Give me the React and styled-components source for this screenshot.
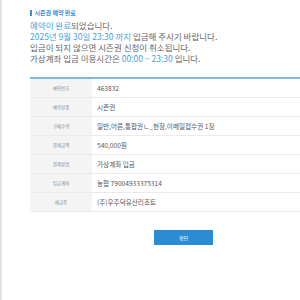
import React from "react";
import styled, { createGlobalStyle } from "styled-components";

const Global = createGlobalStyle`
  html, body {
    margin: 0;
    padding: 0;
    background: #fff;
  }
  body {
    font-family: "Noto Sans CJK KR", "Noto Sans", sans-serif;
  }
`;

const Page = styled.div`
  min-height: 300px;
  box-sizing: border-box;
  border-left: 2px solid #e3e3e3;
  padding: 8px 0 0 28px;
  overflow: hidden;
`;

const Heading = styled.h2`
  margin: 0;
  display: flex;
  align-items: center;
  gap: 3px;
  font-size: 6px;
  line-height: 10px;
  font-weight: bold;
  color: #3b8fd0;
  &::before {
    content: "";
    display: block;
    width: 1.5px;
    height: 6px;
    background: #3b8fd0;
  }
`;

const Messages = styled.div`
  margin-top: 2px;
  font-size: 8.5px;
  line-height: 11px;
  color: #666;
`;

const Line = styled.p`
  margin: 0;
  white-space: nowrap;
`;

const Em = styled.span`
  color: #4aa3e2;
`;

const Table = styled.div`
  margin-top: 13px;
  border-top: 2px solid #7db9e3;
  width: 300px;
`;

const Row = styled.div`
  display: grid;
  grid-template-columns: 62px 1fr;
  height: 19px;
  border-bottom: 1px solid #ebebeb;
  box-sizing: border-box;
`;

const Label = styled.div`
  background: #f4f4f4;
  display: flex;
  align-items: center;
  justify-content: center;
  font-size: 4.5px;
  color: #888;
`;

const Value = styled.div`
  display: flex;
  align-items: center;
  padding-left: 5px;
  font-size: 6.6px;
  color: #555;
  white-space: nowrap;
`;

const Actions = styled.div`
  display: flex;
  padding-left: 124px;
  margin-top: 18px;
`;

const Button = styled.button`
  width: 59px;
  height: 15px;
  border: none;
  background: #2b8bd3;
  color: #fff;
  font-family: inherit;
  font-size: 5px;
  padding: 0;
  cursor: pointer;
`;

const rows = [
  ["예약번호", "463832"],
  ["예약상품", "시즌권"],
  ["구매수량", "일반,어른,통합권ㄴ_현장,이메일접수권 1장"],
  ["결제금액", "540,000원"],
  ["결제방법", "가상계좌 입금"],
  ["입금계좌", "농협 79004933375314"],
  ["예금주", "(주)우주덕유산리조트"],
];

export default function App() {
  return (
    <>
      <Global />
      <Page>
        <Heading>시즌권 예약 완료</Heading>
        <Messages>
          <Line>
            <Em>예약이 완료</Em>되었습니다.
          </Line>
          <Line>
            <Em>2025년 9월 30일 23:30 까지</Em> 입금해 주시기 바랍니다.
          </Line>
          <Line>입금이 되지 않으면 시즌권 신청이 취소됩니다.</Line>
          <Line>
            가상계좌 입금 이용시간은 <Em>00:00 ~ 23:30</Em> 입니다.
          </Line>
        </Messages>
        <Table>
          {rows.map(([label, value]) => (
            <Row key={label}>
              <Label>{label}</Label>
              <Value>{value}</Value>
            </Row>
          ))}
        </Table>
        <Actions>
          <Button type="button">확인</Button>
        </Actions>
      </Page>
    </>
  );
}
